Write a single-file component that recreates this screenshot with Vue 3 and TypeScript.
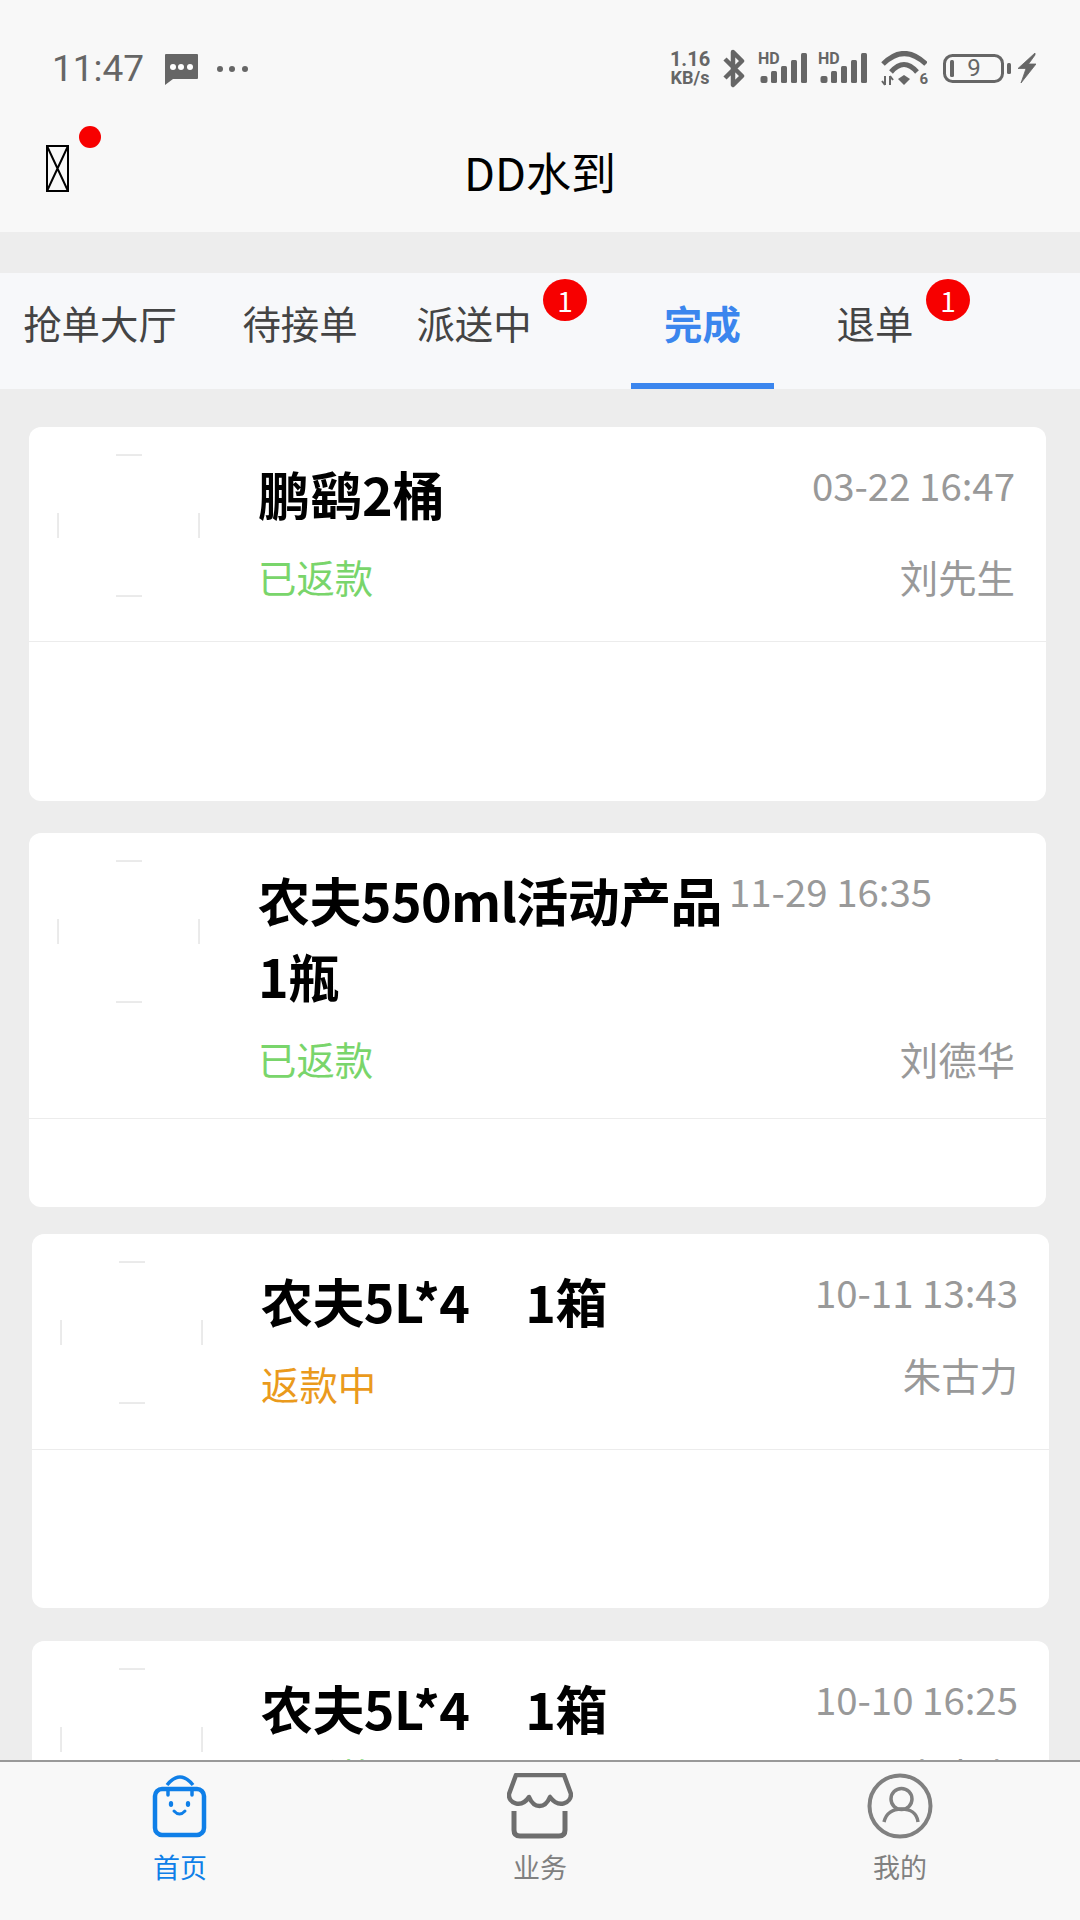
<script setup lang="ts">
import { ref } from 'vue';

interface Tab {
  id: string;
  label: string;
  badge?: number;
}

interface Order {
  id: number;
  title: string;
  date: string;
  status: string;
  statusClass: string;
  name: string;
  tight?: boolean;
  lift?: boolean;
}

const tabs: Tab[] = [
  { id: 'hall', label: '抢单大厅' },
  { id: 'wait', label: '待接单' },
  { id: 'sending', label: '派送中', badge: 1 },
  { id: 'done', label: '完成' },
  { id: 'back', label: '退单', badge: 1 },
];

const activeTab = ref('done');

const orders: Order[] = [
  { id: 1, title: '鹏鹞2桶', date: '03-22 16:47', status: '已返款', statusClass: 'green', name: '刘先生' },
  { id: 2, title: '农夫550ml活动产品1瓶', date: '11-29 16:35', status: '已返款', statusClass: 'green', name: '刘德华', tight: true },
  { id: 3, title: '农夫5L*4\u00a0\u00a0\u00a0\u00a0\u00a01箱', date: '10-11 13:43', status: '返款中', statusClass: 'orange', name: '朱古力', lift: true },
  { id: 4, title: '农夫5L*4\u00a0\u00a0\u00a0\u00a0\u00a01箱', date: '10-10 16:25', status: '已返款', statusClass: 'green', name: '朱古力' },
];
</script>

<template>
  <div class="page">
    <header class="top">
      <div class="status-bar">
        <span class="clock">11:47</span>
        <svg class="msg-icon" width="33" height="31" viewBox="0 0 33 31">
          <path d="M0 1 Q0 0 1 0 H32 Q33 0 33 1 V24 Q33 25 32 25 H8 L0 31 Z" fill="#666" />
          <circle cx="8" cy="13" r="3" fill="#fff" />
          <circle cx="16" cy="13" r="3" fill="#fff" />
          <circle cx="25" cy="13" r="3" fill="#fff" />
        </svg>
        <svg class="more-icon" width="31" height="6" viewBox="0 0 31 6">
          <circle cx="3" cy="3" r="3" fill="#666" />
          <circle cx="15" cy="3" r="3" fill="#666" />
          <circle cx="28" cy="3" r="3" fill="#666" />
        </svg>
        <div class="status-right">
          <div class="speed"><span class="speed-num">1.16</span><span class="speed-unit">KB/s</span></div>
          <svg class="bt" width="24" height="39" viewBox="0 0 24 39">
            <path d="M3 10 L20 27 L11 36 V3 L20 12 L3 29" fill="none" stroke="#666" stroke-width="4.5" stroke-linejoin="round" />
          </svg>
          <div v-for="n in 2" :key="n" class="signal">
            <span class="hd">HD</span>
            <svg width="50" height="30" viewBox="0 0 50 30">
              <rect x="2.5" y="23" width="7" height="7" rx="2" fill="#666" />
              <rect x="13" y="18" width="6" height="12" rx="1.5" fill="#666" />
              <rect x="23" y="13" width="6" height="17" rx="1.5" fill="#666" />
              <rect x="33" y="7" width="6" height="23" rx="1.5" fill="#666" />
              <rect x="43" y="0" width="6" height="30" rx="1.5" fill="#666" />
            </svg>
          </div>
          <div class="wifi">
            <svg width="46" height="35" viewBox="0 0 46 35">
              <path d="M2 13 Q23 -8 45 13" fill="none" stroke="#666" stroke-width="5" />
              <path d="M10 21 Q23 6 36 21" fill="none" stroke="#666" stroke-width="5" />
              <path d="M17 28 L23 24 L29 28 L23 34 Z" fill="#666" />
              <path d="M4 25 V34 M1 30 L4 34 M9 34 V25 M9 25 L12 29" fill="none" stroke="#666" stroke-width="2" />
            </svg>
            <span class="wifi-six">6</span>
          </div>
          <div class="battery">
            <svg width="68" height="29" viewBox="0 0 68 29">
              <rect x="1.5" y="1.5" width="58" height="26" rx="8" fill="none" stroke="#666" stroke-width="3" />
              <rect x="7" y="6" width="4" height="17" rx="1.5" fill="#666" />
              <rect x="64" y="9" width="4" height="11" rx="1.5" fill="#666" />
            </svg>
            <span class="battery-num">9</span>
          </div>
          <svg class="bolt" width="18" height="30" viewBox="0 0 18 30">
            <path d="M17 0 L0 15.5 H8 L3 30 L18 11 H10.5 L17 2 Z" fill="#666" stroke="#666" stroke-width="0.8" />
          </svg>
        </div>
      </div>
      <div class="title-bar">
        <div class="title-left">
          <span class="bell">
            <svg width="23" height="47" viewBox="0 0 23 47">
              <path d="M1 1 H22 V46 H1 Z M1 1 L22 46 M22 1 L1 46" fill="none" stroke="#000" stroke-width="2" />
            </svg>
            <i class="bell-dot"></i>
          </span>
        </div>
        <h1 class="app-title">DD水到</h1>
      </div>
    </header>

    <nav class="tabs">
      <div
        v-for="tab in tabs"
        :key="tab.id"
        class="tab"
        :class="{ active: tab.id === activeTab }"
        @click="activeTab = tab.id"
      >
        <span>{{ tab.label }}</span>
        <b v-if="tab.badge" class="badge">{{ tab.badge }}</b>
      </div>
    </nav>

    <main class="list">
      <article v-for="order in orders" :key="order.id" class="card">
        <div class="card-body">
          <svg class="thumb" width="143" height="143" viewBox="0 0 143 143">
            <path d="M59 1 H85 M1 59 V84 M142 59 V84 M59 142 H85" fill="none" stroke="#d6d6d6" stroke-width="1" />
          </svg>
          <div class="card-info">
            <div class="row-top" :class="{ tight: order.tight }">
              <h2 class="order-title">{{ order.title }}</h2>
              <span class="order-date">{{ order.date }}</span>
            </div>
            <div class="row-bottom" :class="{ lift: order.lift }">
              <span :class="order.statusClass">{{ order.status }}</span>
              <span class="order-name">{{ order.name }}</span>
            </div>
          </div>
        </div>
      </article>
    </main>

    <footer class="bottom-nav">
      <div class="nav-item on">
        <svg width="66" height="66" viewBox="0 0 66 66">
          <rect x="8" y="16" width="49" height="46" rx="7" fill="none" stroke="#0f7fe8" stroke-width="4.5" />
          <path d="M20 12 Q33 -4 46 12" fill="none" stroke="#0f7fe8" stroke-width="3.5" />
          <path d="M21 16 V22 M45 16 V22" fill="none" stroke="#0f7fe8" stroke-width="3.5" stroke-linecap="round" />
          <ellipse cx="24" cy="31" rx="2.2" ry="3" fill="#0f7fe8" />
          <ellipse cx="41" cy="31" rx="2.2" ry="3" fill="#0f7fe8" />
          <path d="M27 38 Q32.5 44 38 38" fill="none" stroke="#0f7fe8" stroke-width="3" stroke-linecap="round" />
        </svg>
        <span>首页</span>
      </div>
      <div class="nav-item">
        <svg width="66" height="66" viewBox="0 0 66 66">
          <path d="M9 2 H57 L64 21 C64 30 52 36 43 24 C38 36 27 36 22 24 C14 36 1 30 2 21 Z" fill="none" stroke="#6e6e6e" stroke-width="4.5" stroke-linejoin="round" />
          <path d="M7 38 V57 Q7 63 13 63 H52 Q58 63 58 57 V38" fill="none" stroke="#6e6e6e" stroke-width="5" />
        </svg>
        <span>业务</span>
      </div>
      <div class="nav-item">
        <svg width="66" height="66" viewBox="0 0 66 66">
          <circle cx="33" cy="33" r="30.5" fill="none" stroke="#808080" stroke-width="4" />
          <circle cx="34.5" cy="26" r="10.5" fill="none" stroke="#808080" stroke-width="3.5" />
          <path d="M17 49 C19 40 26 36 34.5 36 C43 36 50 40 51 49" fill="none" stroke="#808080" stroke-width="3.5" />
        </svg>
        <span>我的</span>
      </div>
    </footer>
  </div>
</template>

<style scoped>
.page {
  width: 1080px;
  height: 1920px;
  display: flex;
  flex-direction: column;
  overflow: hidden;
  background: #ededed;
  font-family: "Noto Sans CJK SC", "Noto Sans", sans-serif;
}

.top {
  background: #f8f8f8;
  height: 232px;
  flex: none;
}

/* status bar */
.status-bar {
  height: 116px;
  box-sizing: border-box;
  padding: 48px 44px 28px 52px;
  display: flex;
  align-items: center;
  color: #666;
}

.clock {
  margin-top: 2px;
  font-family: Roboto, sans-serif;
  font-size: 37px;
  line-height: 40px;
}

.msg-icon {
  margin-top: 2px;
  margin-left: 21px;
}

.more-icon {
  margin-top: 2px;
  margin-left: 19px;
}

.status-right {
  margin-left: auto;
  display: flex;
  align-items: center;
}

.status-right svg {
  display: block;
}

.speed {
  display: flex;
  flex-direction: column;
  align-items: center;
  width: 42px;
  font-family: Roboto, sans-serif;
  font-weight: 700;
  color: #666;
}

.speed-num {
  font-size: 20px;
  line-height: 19px;
}

.speed-unit {
  font-size: 18px;
  line-height: 18px;
}

.bt {
  margin-left: 11px;
}

.signal {
  position: relative;
  margin-left: 12px;
}

.signal + .signal {
  margin-left: 10px;
}

.hd {
  position: absolute;
  left: 0;
  top: -2px;
  font-family: Roboto, sans-serif;
  font-size: 16px;
  font-weight: 700;
  line-height: 16px;
  color: #666;
}

.wifi {
  position: relative;
  margin-left: 13px;
}

.wifi-six {
  position: absolute;
  right: -1px;
  bottom: -1px;
  font-family: Roboto, sans-serif;
  font-size: 15px;
  font-weight: 700;
  line-height: 15px;
  color: #666;
}

.battery {
  position: relative;
  margin-left: 16px;
}

.battery-num {
  position: absolute;
  left: 21px;
  top: 0;
  width: 20px;
  font-family: Roboto, sans-serif;
  font-size: 24px;
  line-height: 29px;
  text-align: center;
  color: #666;
}

.bolt {
  margin-left: 7px;
}

/* title */
.title-bar {
  height: 116px;
  display: grid;
  grid-template-columns: 1fr auto 1fr;
  align-items: center;
}

.title-left {
  padding-left: 46px;
}

.bell {
  position: relative;
  display: block;
  width: 23px;
  height: 47px;
  margin-bottom: 12px;
}

.bell svg {
  display: block;
}

.bell-dot {
  position: absolute;
  left: 33px;
  top: -19px;
  width: 22px;
  height: 22px;
  border-radius: 50%;
  background: #f70000;
}

.app-title {
  margin: 0 0 5px;
  font-size: 45px;
  font-weight: 400;
  line-height: 60px;
  color: #000;
}

/* tabs */
.tabs {
  margin-top: 41px;
  height: 116px;
  flex: none;
  display: flex;
  background: #f7f8fa;
}

.tab {
  position: relative;
  box-sizing: border-box;
  height: 116px;
  padding-bottom: 19px;
  display: flex;
  align-items: center;
  justify-content: center;
  font-size: 38.4px;
  color: #444;
}

.tab:nth-child(1) { width: 200px; }
.tab:nth-child(2) { width: 200px; }
.tab:nth-child(3) { width: 148px; }
.tab:nth-child(4) { width: 143px; margin-left: 83px; }
.tab:nth-child(5) { width: 202px; }

.tab.active {
  color: #3b86ee;
  font-weight: 700;
  border-bottom: 6px solid #3b86ee;
  padding-bottom: 13px;
}

.badge {
  position: absolute;
  top: 6px;
  right: -39px;
  width: 44px;
  height: 42px;
  border-radius: 50%;
  background: #f70000;
  color: #fff;
  font-size: 28px;
  font-weight: 400;
  line-height: 42px;
  text-align: center;
}

.tab:nth-child(5) .badge {
  right: 6px;
}

/* list */
.list {
  flex: 1;
  min-height: 0;
  overflow: hidden;
  padding-top: 38px;
}

.card {
  width: 1017px;
  height: 374px;
  margin-left: 29px;
  background: #fff;
  border-radius: 12px;
}

.card:nth-child(2) { margin-top: 32px; }
.card:nth-child(3) { margin-top: 27px; margin-left: 32px; }
.card:nth-child(4) { margin-top: 33px; margin-left: 32px; }

.card-body {
  box-sizing: border-box;
  min-height: 215px;
  padding: 27px 31px 32px 28px;
  border-bottom: 1px solid #ececec;
  display: flex;
  align-items: flex-start;
}

.card:nth-child(3) .card-body {
  min-height: 216px;
}

.thumb {
  flex: none;
}

.card-info {
  flex: 1;
  min-width: 0;
  margin-left: 58px;
  padding-top: 2px;
}

.row-top {
  display: flex;
  justify-content: space-between;
  align-items: flex-start;
}

.row-top.tight {
  justify-content: flex-start;
}

.order-title {
  margin: 0;
  max-width: 471px;
  font-size: 52px;
  font-weight: 700;
  letter-spacing: -0.6px;
  line-height: 76px;
  color: #000;
}

.card:first-child .order-title {
  letter-spacing: 0;
}

.order-date {
  flex: none;
  font-size: 38.4px;
  line-height: 56px;
  color: #999;
}

.row-bottom {
  margin-top: 16px;
  display: flex;
  justify-content: space-between;
  align-items: flex-start;
  font-size: 38.4px;
  line-height: 56px;
}

.card:nth-child(4) .row-bottom {
  margin-top: 1px;
}

.row-bottom.lift .order-name {
  margin-top: -9px;
}

.order-name {
  color: #999;
}

.green {
  color: #79d56b;
}

.orange {
  color: #ea9a1c;
}

/* bottom nav */
.bottom-nav {
  flex: none;
  height: 160px;
  box-sizing: border-box;
  border-top: 2px solid #999;
  background: #f8f8f8;
  display: grid;
  grid-template-columns: repeat(3, 1fr);
}

.nav-item {
  display: flex;
  flex-direction: column;
  align-items: center;
  padding-top: 11px;
  font-size: 27px;
  line-height: 30px;
  color: #808080;
}

.nav-item span {
  margin-top: 13px;
}

.nav-item.on {
  color: #0f7fe8;
}
</style>
